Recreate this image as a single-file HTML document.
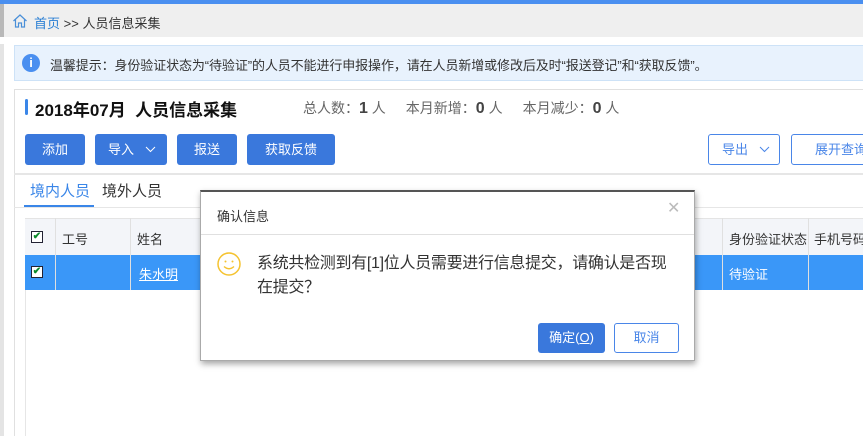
<!DOCTYPE html>
<html><head><meta charset="utf-8"><style>
*{margin:0;padding:0;box-sizing:border-box}
body{width:863px;height:436px;overflow:hidden;background:#fff;position:relative;font-family:"Liberation Sans","Noto Sans CJK SC",sans-serif;font-size:13px;color:#333}
.a{position:absolute}
.btn{position:absolute;background:#3a78dc;color:#fff;border-radius:3px;font-size:13px;text-align:center;line-height:31px;height:31px;top:134px}
.ob{position:absolute;border:1px solid #4a86e8;color:#4a86e8;border-radius:3px;font-size:13px;line-height:29px;height:31px;top:134px;background:#fff}
.chev{position:absolute;top:12px}
</style></head><body>
<div class="a" style="left:0;top:0;width:863px;height:4px;background:#4a8ff0"></div>
<div class="a" style="left:0;top:4px;width:863px;height:33px;background:#efefef"></div>
<div class="a" style="left:0;top:4px;width:4px;height:33px;background:#b8b8b8"></div>
<svg class="a" style="left:12px;top:13px" width="16" height="16" viewBox="0 0 16 16"><path d="M1.5 8L8 2l6.5 6M3.5 6.5V14h3v-4h3v4h3V6.5" fill="none" stroke="#4a8fd8" stroke-width="1.2"/></svg>
<div class="a" style="left:34px;top:13px;font-size:13px;color:#2a7fd4">首页 <span style="color:#333">&gt;&gt;</span> <span style="color:#333">人员信息采集</span></div>
<div class="a" style="left:0;top:44px;width:4px;height:392px;background:#e4e4e4"></div>
<div class="a" style="left:14px;top:45px;width:849px;height:36px;background:#e8f2fd;border:1px solid #cde2f7;border-right:none"></div>
<div class="a" style="left:22px;top:54px;width:18px;height:18px;border-radius:50%;background:#4a8ff0;color:#fff;font-weight:bold;font-size:13px;text-align:center;line-height:18px">i</div>
<div class="a" style="left:50px;top:55px;font-size:13px;color:#333;letter-spacing:-0.1px">温馨提示：身份验证状态为“待验证”的人员不能进行申报操作，请在人员新增或修改后及时“报送登记”和“获取反馈”。</div>
<div class="a" style="left:14px;top:89px;width:849px;height:347px;border:1px solid #e0e0e0;border-right:none;border-bottom:none"></div>
<div class="a" style="left:25px;top:99px;width:3px;height:16px;background:#3a86e8;border-radius:2px"></div>
<div class="a" style="left:35px;top:96px;font-size:17px;font-weight:bold;color:#111">2018年07月&nbsp;&nbsp;人员信息采集</div>
<div class="a" style="left:303px;top:98px;font-size:14px;color:#666">总人数：<b style="font-size:16px;color:#444">1</b> 人<span style="display:inline-block;width:20px"></span>本月新增：<b style="font-size:16px;color:#444">0</b> 人<span style="display:inline-block;width:20px"></span>本月减少：<b style="font-size:16px;color:#444">0</b> 人</div>
<div class="btn" style="left:25px;width:60px">添加</div>
<div class="btn" style="left:95px;width:72px;text-align:left;padding-left:13px">导入<svg class="chev" style="left:50px" width="11" height="7" viewBox="0 0 11 7"><path d="M1 1l4.5 4.5L10 1" fill="none" stroke="#fff" stroke-width="1"/></svg></div>
<div class="btn" style="left:177px;width:60px">报送</div>
<div class="btn" style="left:247px;width:88px">获取反馈</div>
<div class="ob" style="left:708px;width:72px;padding-left:13px">导出<svg class="chev" style="left:50px;top:11px" width="11" height="7" viewBox="0 0 11 7"><path d="M1 1l4.5 4.5L10 1" fill="none" stroke="#4a86e8" stroke-width="1"/></svg></div>
<div class="ob" style="left:791px;width:90px;padding-left:23px">展开查询</div>
<div class="a" style="left:14px;top:173px;width:849px;height:2px;background:#e6e6e6"></div>
<div class="a" style="left:30px;top:180px;font-size:15px;color:#3a86e8">境内人员</div>
<div class="a" style="left:102px;top:180px;font-size:15px;color:#333">境外人员</div>
<div class="a" style="left:24px;top:205px;width:70px;height:2px;background:#3a86e8"></div>
<div class="a" style="left:14px;top:207px;width:849px;height:1px;background:#e6e6e6"></div>
<div class="a" style="left:25px;top:218px;width:838px;height:37px;background:#f3f5f9;border-top:1px solid #e4e4e4"></div>
<div class="a" style="left:25px;top:255px;width:838px;height:35px;background:#3a97f8"></div>
<div class="a" style="left:55px;top:218px;width:1px;height:72px;background:#e0e0e0"></div>
<div class="a" style="left:130px;top:218px;width:1px;height:72px;background:#e0e0e0"></div>
<div class="a" style="left:722px;top:218px;width:1px;height:72px;background:#e0e0e0"></div>
<div class="a" style="left:808px;top:218px;width:1px;height:72px;background:#e0e0e0"></div>
<div class="a" style="left:25px;top:290px;width:1px;height:146px;background:#e6e6e6"></div>
<div class="a" style="left:31px;top:231px;width:12px;height:12px;border:1px solid #223;background:#fff;color:#0a8a2a;font-size:10px;line-height:10px;text-align:center;font-weight:bold">✔</div>
<div class="a" style="left:31px;top:266px;width:12px;height:12px;border:1px solid #223;background:#fff;color:#0a8a2a;font-size:10px;line-height:10px;text-align:center;font-weight:bold">✔</div>
<div class="a" style="left:62px;top:229px;font-size:13px">工号</div>
<div class="a" style="left:137px;top:229px;font-size:13px">姓名</div>
<div class="a" style="left:139px;top:264px;font-size:13px;color:#fff;text-decoration:underline">朱水明</div>
<div class="a" style="left:729px;top:229px;font-size:13px">身份验证状态</div>
<div class="a" style="left:814px;top:229px;font-size:13px;white-space:nowrap">手机号码</div>
<div class="a" style="left:729px;top:264px;font-size:13px;color:#fff">待验证</div>
<div class="a" style="left:200px;top:190px;width:495px;height:171px;background:#fff;border:1px solid #aaa;border-top:2px solid #555;box-shadow:1px 3px 6px rgba(0,0,0,.35)">
<div class="a" style="left:16px;top:14px;font-size:13px;color:#333">确认信息</div>
<div class="a" style="left:466px;top:6px;font-size:16px;color:#bbb">✕</div>
<div class="a" style="left:0;top:42px;width:493px;height:1px;background:#e0e0e0"></div>
<svg class="a" style="left:16px;top:60px" width="24" height="24" viewBox="0 0 24 24"><circle cx="12" cy="12" r="11" fill="none" stroke="#f5c330" stroke-width="1.5"/><circle cx="8.5" cy="9.5" r="1" fill="#f5c330"/><circle cx="15.5" cy="9.5" r="1" fill="#f5c330"/><path d="M7 14.5q5 4.5 10 0" fill="none" stroke="#f5c330" stroke-width="1.4"/></svg>
<div class="a" style="left:56px;top:60px;width:430px;font-size:16px;line-height:24px;color:#333;letter-spacing:-0.3px">系统共检测到有[1]位人员需要进行信息提交，请确认是否现<br>在提交？</div>
<div class="a" style="left:337px;top:131px;width:67px;height:30px;background:#3a78dc;color:#fff;border-radius:3px;text-align:center;line-height:30px;font-size:13px">确定(<u>O</u>)</div>
<div class="a" style="left:413px;top:131px;width:65px;height:30px;border:1px solid #4a86e8;color:#4a86e8;border-radius:3px;text-align:center;line-height:28px;font-size:13px">取消</div>
</div>
</body></html>
